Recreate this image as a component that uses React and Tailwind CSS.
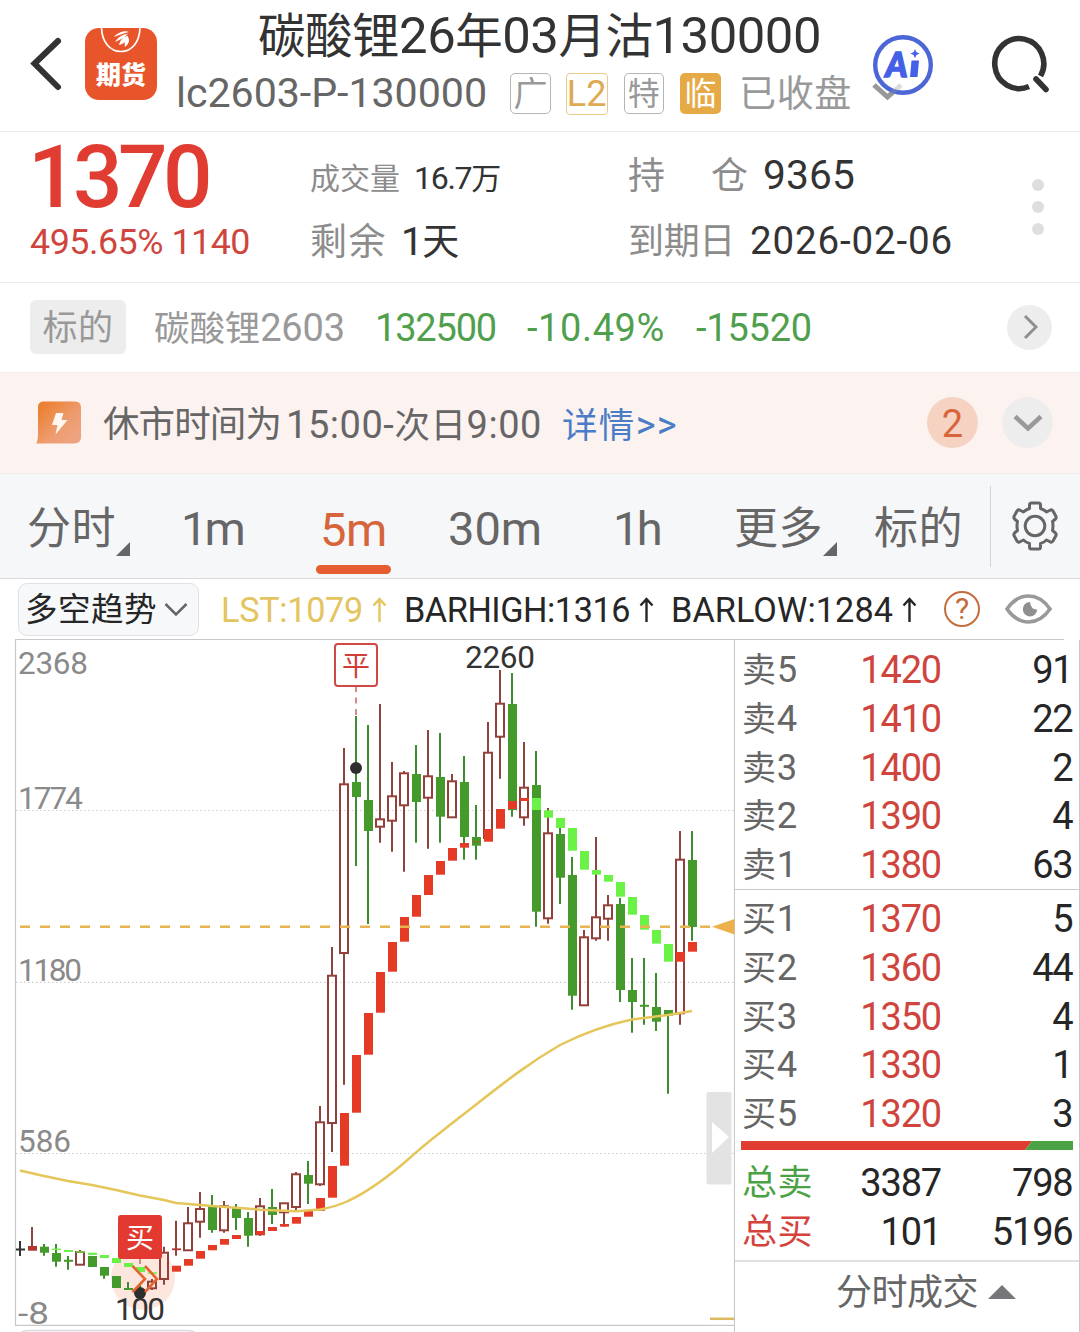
import React, { useLayoutEffect, useRef } from "react";

/* Splits a string into Han and Latin runs; Latin runs are drawn slightly larger. */
function runs(text) {
  return text.match(/[\u2E80-\u9FFF]+|[^\u2E80-\u9FFF]+/g) || [];
}

/* One line of text, tracked so that it fills the width given by its class. */
function Fit({ children, className = "" }) {
  const box = useRef(null);
  const inner = useRef(null);
  useLayoutEffect(() => {
    const el = inner.current;
    el.style.letterSpacing = "0px";
    const natural = el.getBoundingClientRect().width;
    const target = box.current.getBoundingClientRect().width;
    el.style.letterSpacing = (target - natural) / children.length + "px";
  }, [children]);
  return (
    <span ref={box} className={"inline-block shrink-0 whitespace-pre leading-none " + className}>
      <span ref={inner}>
        {runs(children).map((r, i) =>
          /[\u2E80-\u9FFF]/.test(r) ? <span key={i}>{r}</span> : <span key={i} className="text-[1.07em] leading-none">{r}</span>
        )}
      </span>
    </span>
  );
}

function Header() {
  return (
    <header className="flex h-[132px] border-b border-[#ececec]">
      <svg className="ml-[28px] mt-[36px] h-[56px] w-[36px] shrink-0" viewBox="0 0 36 56" fill="none" stroke="#333" strokeWidth="6">
        <path d="M30 5 L6.500 27.500 L30 51" strokeLinecap="round" />
      </svg>
      <div className="ml-[21px] mt-[28px] flex h-[72px] w-[72px] shrink-0 flex-col items-center rounded-[14px] bg-[#e9552b]">
        <svg className="h-[26px] w-[44px]" viewBox="0 0 44 26" fill="none">
          <path d="M2.500 0 C3 14 11 23.500 22 23.500 S40.500 14 41 0" stroke="#fff" strokeWidth="1.700" />
          <path d="M15 9 C18 5 25 2 30 4 C25 5 20 7 15 9Z M16 14 C19 9 24 6 29 6 C26 9 21 12 16 14Z M20 17 C21 12 25 8 29 8 C29 12 25 16 20 17Z M26 19 C25 15 26 11 29 9 C31 12 30 16 26 19Z" fill="#fff" />
        </svg>
        <span className="mt-[9px] text-[25px] font-black leading-[26px] text-white">期货</span>
      </div>
      <div className="ml-[19px] flex w-[676px] shrink-0 flex-col">
        <Fit className="ml-[82px] mt-[11px] w-[563px] text-[47.500px] text-[#333]">碳酸锂26年03月沽130000</Fit>
        <div className="mt-[11px] flex items-center">
          <Fit className="w-[311px] text-[38.500px] text-[#666]">lc2603-P-130000</Fit>
          <span className="ml-[23px] flex h-[41px] w-[41px] items-center justify-center rounded-[5px] border-[1.500px] border-[#b5b5b5] text-[34px] leading-none text-[#999]">广</span>
          <span className="ml-[15px] flex h-[42px] w-[42px] items-center justify-center rounded-[4px] border-[1.500px] border-[#ebc988] text-[36px] leading-none text-[#deaa52]">L2</span>
          <span className="ml-[16px] flex h-[41px] w-[41px] items-center justify-center rounded-[5px] border-[1.500px] border-[#b5b5b5] text-[32px] leading-none text-[#999]">特</span>
          <span className="ml-[16px] flex h-[41px] w-[41px] items-center justify-center rounded-[5px] bg-[#e5a945] text-[32px] leading-none text-white">临</span>
          <Fit className="ml-[18px] mt-[2px] w-[113px] text-[37px] text-[#999]">已收盘</Fit>
        </div>
      </div>
      <svg className="ml-[18px] mt-[32px] h-[72px] w-[66px] shrink-0" viewBox="870 32 66 72" fill="none">
        <path d="M874 85 L887.500 97 L901 85" stroke="#999" strokeWidth="5" />
        <circle cx="903" cy="65" r="27.800" fill="#fff" stroke="#4c66d8" strokeWidth="4.400" />
        <path d="M874 85 L887.500 97 L901 85" stroke="#999" strokeWidth="5" opacity=".35" />
        <text x="885.500" y="76.500" fontSize="34" fontWeight="900" fontStyle="italic" fontFamily="Lato" fill="#4360e6" stroke="#4360e6" strokeWidth="1.500" textLength="22" lengthAdjust="spacingAndGlyphs">A</text>
        <path d="M911.500 60.500 H919 L917.500 77 H910Z M915 49 l1.400 3.200 3.200 1.400 -3.200 1.400 -1.400 3.200 -1.400 -3.200 -3.200 -1.400 3.200 -1.400Z" fill="#4360e6" />
      </svg>
      <svg className="ml-[52px] mt-[32px] h-[64px] w-[66px] shrink-0" viewBox="988 32 66 64" fill="none" stroke="#333" strokeWidth="5.600">
        <path d="M1029 86.500 A24.500 25 0 1 1 1040.500 76" />
        <path d="M1036 79 L1046 89.500" strokeLinecap="round" />
      </svg>
    </header>
  );
}

function Quote() {
  return (
    <section className="flex h-[151px] border-b border-[#ececec]">
      <div className="ml-[28px] flex w-[281px] flex-col">
        <Fit className="mt-[2px] w-[180px] text-[81.500px] font-medium text-[#e03c31]">1370</Fit>
        <Fit className="ml-[2px] mt-[4px] w-[220px] text-[33.500px] text-[#cf453d]">495.65% 1140</Fit>
      </div>
      <div className="ml-px flex w-[318px] flex-col text-[#333]">
        <div className="mt-[30px] flex h-[36px] items-baseline">
          <Fit className="w-[90px] text-[30px] text-[#8c8c8c]">成交量</Fit>
          <Fit className="ml-[14px] w-[86px] text-[30px]">16.7万</Fit>
        </div>
        <div className="mt-[24px] flex h-[40px] items-baseline">
          <Fit className="w-[77px] text-[37px] text-[#8c8c8c]">剩余</Fit>
          <Fit className="ml-[14px] w-[57px] text-[37px]">1天</Fit>
        </div>
      </div>
      <div className="flex w-[400px] flex-col text-[#333]">
        <div className="mt-[23px] flex h-[42px] items-baseline">
          <Fit className="w-[37px] text-[37px] text-[#8c8c8c]">持</Fit>
          <Fit className="ml-[46px] w-[37px] text-[37px] text-[#8c8c8c]">仓</Fit>
          <Fit className="ml-[15px] w-[92px] text-[38px]">9365</Fit>
        </div>
        <div className="mt-[25px] flex h-[40px] items-baseline">
          <Fit className="w-[107px] text-[36px] text-[#8c8c8c]">到期日</Fit>
          <Fit className="ml-[15px] w-[203px] text-[36px]">2026-02-06</Fit>
        </div>
      </div>
      <div className="ml-[4px] mt-[47px] flex flex-col gap-[10px]">
        <i className="h-3 w-3 rounded-full bg-[#dedede]" />
        <i className="h-3 w-3 rounded-full bg-[#dedede]" />
        <i className="h-3 w-3 rounded-full bg-[#dedede]" />
      </div>
    </section>
  );
}

function Underlying() {
  return (
    <section className="flex h-[90px] items-center border-b border-[#ececec] pb-px text-[35.500px] text-[#4f9f4d]">
      <span className="ml-[30px] flex h-[54px] w-[96px] items-center justify-center rounded-[6px] bg-[#ededed] text-[#999]">
        <Fit className="mt-[3px] w-[71px] text-[35px]">标的</Fit>
      </span>
      <Fit className="ml-[28px] mt-[3px] w-[191px] text-[#999]">碳酸锂2603</Fit>
      <Fit className="ml-[30px] mt-[3px] w-[121px]">132500</Fit>
      <Fit className="ml-[31px] mt-[3px] w-[138px]">-10.49%</Fit>
      <Fit className="ml-[31px] mt-[3px] w-[116px]">-15520</Fit>
      <span className="ml-[195px] flex h-[45px] w-[45px] shrink-0 items-center justify-center rounded-full bg-[#ededed]">
        <svg className="h-[26px] w-[16px]" viewBox="0 0 16 26" fill="none" stroke="#8f8f8f" strokeWidth="3">
          <path d="M3 2 L14 13 L3 24" />
        </svg>
      </span>
    </section>
  );
}

function Notice() {
  return (
    <section className="flex h-[101px] items-center border-b border-[#eeebe8] bg-[#fcf2f0] pb-px text-[35.500px]">
      <svg className="-mt-px ml-[36px] h-[43px] w-[45px] shrink-0" viewBox="0 0 45 43">
        <defs>
          <linearGradient id="flash" x1="0" y1="0" x2="1" y2="1">
            <stop offset="0" stopColor="#ea7a22" />
            <stop offset=".6" stopColor="#ee9d72" />
            <stop offset="1" stopColor="#eda584" />
          </linearGradient>
        </defs>
        <path d="M2 6 Q2 0.500 8 0.500 H39 Q45 0.500 45 6.500 V36 Q45 42.500 38 42.500 H0.500 Q2 38 2 34Z" fill="url(#flash)" />
        <path d="M20 12 H27.500 L25.500 19 H31.500 L19.500 33.500 L21.500 24 H16Z" fill="#fff6f0" />
      </svg>
      <Fit className="ml-[22px] mt-[5px] w-[178px] text-[36.500px] text-[#666]">休市时间为</Fit>
      <Fit className="ml-[5px] mt-[5px] w-[256px] text-[#666]">15:00-次日9:00</Fit>
      <Fit className="ml-[20px] mt-[5px] w-[116px] text-[#4b7cc6]">详情&gt;&gt;</Fit>
      <span className="ml-[249px] flex h-[51px] w-[51px] shrink-0 items-center justify-center rounded-full bg-[#f5d2c1] pt-[3px] text-[38px] leading-none text-[#d8653a]">2</span>
      <span className="ml-[24px] flex h-[51px] w-[51px] shrink-0 items-center justify-center rounded-full bg-[#ededed]">
        <svg className="h-[20px] w-[30px]" viewBox="0 0 30 20" fill="none" stroke="#999" strokeWidth="4.500">
          <path d="M2 3.500 L15 15.500 L28 3.500" />
        </svg>
      </span>
    </section>
  );
}

function Corner() {
  return (
    <svg className="mt-[45px] h-[14px] w-[14px] shrink-0" viewBox="0 0 14 14">
      <path d="M14 0 V14 H0Z" fill="#666" />
    </svg>
  );
}

function Gear() {
  return (
    <svg className="ml-[20px] h-[50px] w-[48px] shrink-0" viewBox="-24 -25 48 50" fill="none" stroke="#666" strokeWidth="3" strokeLinejoin="round">
      <path d="M-5.500 -21 Q-5.500 -23 -3.500 -23 H3.500 Q5.500 -23 5.500 -21 V-17.500 Q9 -16.500 11.500 -14 L15.500 -16 Q17 -16.500 18 -15 L21 -9.500 Q21.500 -8 20.500 -7 L17.500 -4.500 Q18.500 0 17.500 4.500 L20.500 7 Q21.500 8 21 9.500 L18 15 Q17 16.500 15.500 16 L11.500 14 Q9 16.500 5.500 17.500 V21 Q5.500 23 3.500 23 H-3.500 Q-5.500 23 -5.500 21 V17.500 Q-9 16.500 -11.500 14 L-15.500 16 Q-17 16.500 -18 15 L-21 9.500 Q-21.500 8 -20.500 7 L-17.500 4.500 Q-18.500 0 -17.500 -4.500 L-20.500 -7 Q-21.500 -8 -21 -9.500 L-18 -15 Q-17 -16.500 -15.500 -16 L-11.500 -14 Q-9 -16.500 -5.500 -17.500Z" />
      <circle r="9.800" />
    </svg>
  );
}

function Tabs() {
  return (
    <nav className="flex h-[105px] items-center border-b border-[#d9dadd] bg-[#f6f7f9] text-[44px] text-[#666]">
      <Fit className="ml-[27px] mt-[6px] w-[89px]">分时</Fit>
      <Corner />
      <Fit className="ml-[51px] mt-[6px] w-[62px]">1m</Fit>
      <div className="ml-[73px] flex h-full w-[75px] flex-col items-center justify-between text-[#d7653b]">
        <Fit className="mt-[32px] w-[67px]">5m</Fit>
        <i className="mb-[4px] h-[9px] w-[75px] rounded-full bg-[#e65e2f]" />
      </div>
      <Fit className="ml-[57px] mt-[6px] w-[94px]">30m</Fit>
      <Fit className="ml-[71px] mt-[6px] w-[47px]">1h</Fit>
      <Fit className="ml-[74px] mt-[6px] w-[89px]">更多</Fit>
      <Corner />
      <Fit className="ml-[37px] mt-[6px] w-[89px]">标的</Fit>
      <i className="ml-[27px] h-[81px] w-px bg-[#d3d4d6]" />
      <Gear />
    </nav>
  );
}

function Indicator() {
  return (
    <section className="flex h-[60px] items-center text-[32px] text-[#262626]">
      <div className="ml-[18px] flex h-[53px] w-[181px] shrink-0 items-center rounded-[9px] border-[1.500px] border-[#dfe1e7] bg-[#f7f8fa]">
        <Fit className="ml-[6px] mt-[3px] w-[132px] text-[32.500px]">多空趋势</Fit>
        <svg className="ml-[7px] h-[15px] w-[24px]" viewBox="0 0 24 15" fill="none" stroke="#666" strokeWidth="2.500">
          <path d="M1.500 2 L12 12.500 L22.500 2" />
        </svg>
      </div>
      <Fit className="ml-[22px] mt-[3px] w-[142px] text-[#e3c45f]">LST:1079</Fit>
      <Arrow className="text-[#e3c45f]" />
      <Fit className="ml-[17px] mt-[3px] w-[226px]">BARHIGH:1316</Fit>
      <Arrow />
      <Fit className="ml-[17px] mt-[3px] w-[222px]">BARLOW:1284</Fit>
      <Arrow />
      <span className="ml-[27px] flex h-[36px] w-[36px] shrink-0 items-center justify-center rounded-full border-[2.500px] border-[#c46c3c] text-[30px] leading-none text-[#c46c3c]">?</span>
      <svg className="ml-[25px] h-[30px] w-[47px] shrink-0" viewBox="0 0 47 30" fill="none">
        <path d="M2 15 Q11 2 23.500 2 T45 15 Q36 28 23.500 28 T2 15Z" stroke="#999" strokeWidth="3.600" />
        <path d="M25 8 A7.200 7.200 0 1 0 32.200 15.500 Q26 16 25 8Z" fill="#8f8f8f" />
      </svg>
    </section>
  );
}

function Arrow({ className = "" }) {
  return (
    <svg className={"ml-[9px] mt-[2px] h-[26px] w-[15px] shrink-0 " + className} viewBox="0 0 15 26" fill="none" stroke="currentColor" strokeWidth="2.400">
      <path d="M7.500 25 V2 M1.500 8.500 L7.500 2 L13.500 8.500" />
    </svg>
  );
}

/* kind (r hollow, f filled red, g green, k doji), high, low, body top, body bottom, band top, band bottom, band colour */
const candles = [
  ["k", 1241, 1256, 1248.5, 1250.5],
  ["f", 1227, 1250, 1246, 1250.7],
  ["g", 1244, 1255.7, 1246.7, 1252.7],
  ["g", 1244, 1266.7, 1253, 1261.7, 1248.6, 1250, "l"],
  ["g", 1256, 1269.7, 1259.8, 1261.8, 1250, 1252, "l"],
  ["r", 1250, 1264, 1252, 1264.7, 1251.3, 1252.6, "l"],
  ["g", 1256, 1267, 1256, 1267, 1252.7, 1255, "l"],
  ["g", 1267, 1278.7, 1267, 1275.7, 1255, 1258, "l"],
  ["g", 1276, 1288, 1276, 1288, 1258, 1263, "l"],
  ["g", 1282, 1290, 1288, 1290, 1263, 1267, "l"],
  ["g", 1284, 1294, 1289, 1291, 1267, 1272, "l"],
  ["r", 1279, 1290, 1281.7, 1288.3, 1272.3, 1273.8, "l"],
  ["r", 1246.7, 1284.7, 1252.7, 1279],
  ["f", 1220.7, 1255.7, 1248.4, 1250.2, 1265.7, 1271.7, "e"],
  ["r", 1207, 1250, 1223.3, 1250.3, 1259, 1265.7, "e"],
  ["r", 1192, 1237.7, 1209, 1221.7, 1251, 1258.7, "e"],
  ["g", 1195, 1232.7, 1207, 1230, 1245, 1250.3, "e"],
  ["r", 1201, 1232.7, 1206.3, 1230.3, 1239, 1244.7, "e"],
  ["g", 1204, 1230, 1207, 1218, 1235, 1239, "e"],
  ["g", 1212, 1246.7, 1218, 1235.7],
  ["r", 1198, 1235.7, 1206.3, 1234.3, 1231, 1234.7, "e"],
  ["g", 1189, 1224, 1207, 1215, 1227, 1231, "e"],
  ["r", 1203, 1226.7, 1203.3, 1212.3, 1224, 1226.7, "e"],
  ["r", 1172, 1210, 1174.3, 1207, 1217, 1223.7, "e"],
  ["g", 1161, 1204, 1175, 1183.7, 1211, 1216.7, "e"],
  ["r", 1106, 1186, 1122.3, 1184.3, 1198, 1210.7, "e"],
  ["r", 947, 1152, 975.7, 1123, 1166, 1197.7, "e"],
  ["r", 748, 1084.7, 784.3, 953, 1113, 1165.7, "e"],
  ["g", 716, 866, 782, 797, 1055, 1112.7, "e"],
  ["g", 725, 924, 800, 831, 1013, 1054.7, "e"],
  ["r", 704, 842.7, 819.3, 826.7, 972, 1012.7, "e"],
  ["r", 762, 851.7, 796.3, 820.7, 942, 971.7, "e"],
  ["r", 771, 871.7, 773.3, 805.3, 917, 941.7, "e"],
  ["g", 745, 842.7, 774, 802, 895, 916.7, "e"],
  ["r", 730, 848.7, 776.3, 797.7, 875, 895, "e"],
  ["g", 733, 842.7, 777, 816.7, 861, 874.7, "e"],
  ["r", 774, 817, 781.3, 817.3, 848, 860.7, "e"],
  ["g", 756, 859.7, 782, 837, 843, 847.7, "e"],
  ["g", 805, 859.7, 837, 845.7, 841, 843, "b"],
  ["r", 722, 838, 752.7, 838, 829, 841.7, "e"],
  ["r", 670, 778.7, 703.7, 736.7, 809, 828.7, "e"],
  ["g", 673, 816.7, 704, 810, 801, 809, "e"],
  ["r", 742, 825.7, 787.7, 817.3, 798, 801, "e"],
  ["g", 751, 926.7, 785, 911.7, 798, 810, "l"],
  ["r", 808, 923.7, 833.3, 918.3, 810.3, 817.7, "l"],
  ["g", 828, 904, 834, 877.7, 818, 828, "l"],
  ["g", 857, 1009.7, 875, 995.7, 828, 850.7, "l"],
  ["r", 930, 1005, 937.3, 1005.3, 851, 869.7, "l"],
  ["r", 837, 940.7, 917.3, 938.3, 870, 874.7, "l"],
  ["r", 895, 940.7, 905.3, 918.7, 875, 881.7, "l"],
  ["g", 898, 1002, 904, 990, 882, 896.7, "l"],
  ["g", 958, 1032.7, 990, 1002, 897, 914.7, "l"],
  ["g", 958, 1024.7, 1004.8, 1006.8, 915, 929.7, "l"],
  ["g", 973, 1031, 1007, 1021.7, 930, 943.7, "l"],
  ["g", 1010, 1093.7, 1010, 1015.7, 944, 961.7, "l"],
  ["r", 831, 1024.7, 859.7, 1013.3, 952, 961.7, "e"],
  ["g", 831, 940.7, 860, 927, 942, 951.7, "e"],
];

const fills = { k: "#333", f: "#b0352d", g: "#449a2b", e: "#e53a25", l: "#6af246", b: "#6f7f22" };
const wicks = { k: "#333", f: "#8d453f", g: "#3f8b30", r: "#8d453f" };

function Candle({ x, c }) {
  const [kind, high, low, top, bottom, bandTop, bandBottom, band] = c;
  return (
    <g>
      {kind === "r" ? (
        <>
          <path d={`M${x} ${high}V${Math.max(top, high)}M${x} ${bottom}V${Math.max(low, bottom)}`} stroke={wicks.r} strokeWidth="2" />
          <rect x={x - 4} y={top} width="8" height={bottom - top} fill="none" stroke="#93403a" strokeWidth="2" />
        </>
      ) : (
        <>
          <path d={`M${x} ${high}V${low}`} stroke={wicks[kind]} strokeWidth="2" />
          <rect x={x - 4} y={top} width="9" height={bottom - top} fill={fills[kind]} />
        </>
      )}
      {band && <rect x={x - 4} y={bandTop} width="9" height={bandBottom - bandTop} fill={fills[band]} />}
    </g>
  );
}

function Chart() {
  return (
    <svg className="h-[692px] w-[735px] shrink-0" viewBox="0 640 735 692" fontFamily="Roboto, 'Noto Sans CJK SC', sans-serif">
      <path d="M15.500 640 V1325.300 H735 M734.500 640 V1332" stroke="#c9c9c9" strokeWidth="1.200" fill="none" />
      <rect x="18" y="1330.500" width="180" height="40" rx="9" fill="#f7f8fa" stroke="#dadce2" strokeWidth="1.500" />
      <g stroke="#cfcfcf" strokeWidth="1.200" strokeDasharray="1.500 2.500">
        <path d="M16 810.500 H734" />
        <path d="M16 982.300 H734" />
        <path d="M16 1153.500 H734" />
      </g>
      <path d="M710 1318.800 H734" stroke="#ddb95f" strokeWidth="2.500" />
      <g fontSize="31.500" fill="#8a8a8a">
        <text x="18" y="674" textLength="70">2368</text>
        <text x="18" y="809" textLength="65">1774</text>
        <text x="18" y="981" textLength="64">1180</text>
        <text x="18" y="1152" textLength="53">586</text>
        <text x="18" y="1323.500" textLength="31" lengthAdjust="spacingAndGlyphs">-8</text>
      </g>
      <circle cx="143" cy="1278" r="32" fill="#fde6de" />
      {candles.map((c, i) => (
        <Candle key={i} x={20 + i * 12} c={c} />
      ))}
      <path d="M20 1170.500 L44 1176 L68 1181 L92 1185 L116 1190 L140 1195.500 L164 1200 L176 1203 L212 1206 L236 1207.700 L260 1209.700 L296 1211.300 L320 1209.500 Q338 1206 348 1201 Q372 1190 404 1163 C428 1141 440 1133 460 1117 C500 1086 524 1066 560 1045 Q596 1027 632 1019.500 L668 1015 L692 1011" fill="none" stroke="#e4c65a" strokeWidth="2.500" />
      <path d="M20 926.700 H712" stroke="#e8b451" strokeWidth="2.500" strokeDasharray="10 10" />
      <path d="M712 926.700 L734.500 919 V934.500Z" fill="#ecb14b" />
      <path d="M356 686 V716" stroke="#d58a86" strokeWidth="2" strokeDasharray="6 5.500" />
      <rect x="335" y="644" width="42" height="42" rx="3" fill="#fff" stroke="#cf4a44" strokeWidth="2" />
      <text x="342" y="676" fontSize="28" fill="#cf3f38">平</text>
      <circle cx="356" cy="768" r="6" fill="#2e2e2e" />
      <path d="M140 1259 V1264" stroke="#d58a86" strokeWidth="2" />
      <rect x="118" y="1215" width="44" height="44" rx="3" fill="#e23a31" />
      <text x="126" y="1248" fontSize="28" fill="#fff">买</text>
      <circle cx="140" cy="1293" r="6" fill="#2e2e2e" />
      <path d="M132.500 1266 L145 1279 L132.500 1292 M145 1266 L157 1279 L145 1292" fill="none" stroke="#e4652f" strokeWidth="2.600" />
      <g fontSize="31.500" fill="#333">
        <text x="465" y="668" textLength="70">2260</text>
        <text x="115" y="1320" textLength="50">100</text>
      </g>
      <rect x="706.500" y="1092" width="25" height="92.500" rx="2" fill="#e3e3e3" />
      <path d="M712 1122 L729 1137 L712 1153Z" fill="#fff" />
    </svg>
  );
}

const asks = [["卖5", "1420", "91"], ["卖4", "1410", "22"], ["卖3", "1400", "2"], ["卖2", "1390", "4"], ["卖1", "1380", "63"]];
const bids = [["买1", "1370", "5"], ["买2", "1360", "44"], ["买3", "1350", "4"], ["买4", "1330", "1"], ["买5", "1320", "3"]];

function Level({ row }) {
  return (
    <div className="flex h-[48.700px] items-center pl-[7px] pr-[6px]">
      <Fit className="w-[56px] text-[34px] text-[#666]">{row[0]}</Fit>
      <span className="w-[143px] text-right text-[38px] leading-none tracking-[-1.200px] text-[#cf453d]">{row[1]}</span>
      <span className="flex-1 text-right text-[38px] leading-none tracking-[-1.200px] text-[#262626]">{row[2]}</span>
    </div>
  );
}

function Total({ label, price, qty, className }) {
  return (
    <div className="flex h-[48.700px] items-center pl-[7px] pr-[6px] text-[38px] leading-none tracking-[-1.200px] text-[#262626]">
      <Fit className={"w-[71px] text-[35px] " + className}>{label}</Fit>
      <span className="w-[128px] text-right">{price}</span>
      <span className="flex-1 text-right">{qty}</span>
    </div>
  );
}

function Book() {
  return (
    <aside className="flex w-[344.500px] shrink-0 flex-col border-r-[1.500px] border-[#c9c9c9]">
      <div className="h-[250px] border-b border-[#c9c9c9] pt-[6px]">
        {asks.map((r) => <Level key={r[0]} row={r} />)}
      </div>
      <div className="h-[251px] pt-[5px]">
        {bids.map((r) => <Level key={r[0]} row={r} />)}
      </div>
      <svg className="ml-[6px] h-[9px] w-[332px]" viewBox="0 0 332 9">
        <path d="M0 0 H291 L284 9 H0Z" fill="#e03c31" />
        <path d="M291 0 H332 V9 H284Z" fill="#4aa245" />
      </svg>
      <div className="h-[112px] border-b-2 border-[#dfe0e2] pt-[9px]">
        <Total label="总卖" price="3387" qty="798" className="text-[#4aa245]" />
        <Total label="总买" price="101" qty="5196" className="text-[#d3433c]" />
      </div>
      <div className="flex h-[60px] items-center pl-[101px]">
        <Fit className="mt-[2px] w-[142px] text-[36px] text-[#666]">分时成交</Fit>
        <svg className="ml-[10px] h-[14px] w-[28px]" viewBox="0 0 28 14">
          <path d="M14 0 L28 14 H0Z" fill="#77777b" />
        </svg>
      </div>
    </aside>
  );
}

export default function App() {
  return (
    <main className="h-[1332px] w-[1080px] overflow-hidden bg-white font-[Roboto,'Noto_Sans_CJK_SC',sans-serif]">
      <Header />
      <Quote />
      <Underlying />
      <Notice />
      <Tabs />
      <Indicator />
      <i className="ml-[15px] block h-px w-[1049px] bg-[#c9c9c9]" />
      <div className="flex">
        <Chart />
        <Book />
      </div>
    </main>
  );
}
